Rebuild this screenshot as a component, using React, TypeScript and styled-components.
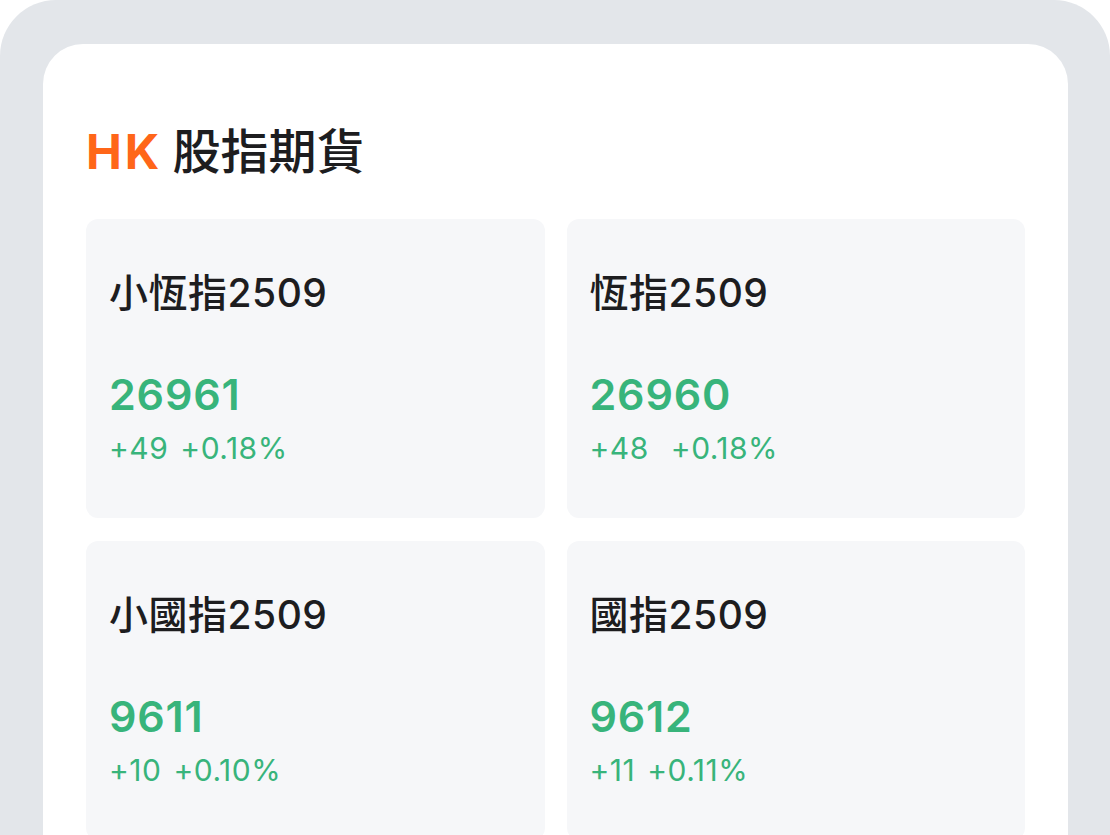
import styled, { createGlobalStyle } from 'styled-components';

const GlobalStyle = createGlobalStyle`
  html, body {
    margin: 0;
    padding: 0;
    background: #ffffff;
    overflow: hidden;
  }
  body {
    font-family: "Inter", "Noto Sans CJK TC", sans-serif;
  }
`;

//#region Layout
const Frame = styled.div`
  width: 1110px;
  height: 835px;
  box-sizing: border-box;
  background: #e3e6ea;
  border-radius: 56px 56px 0 0;
  padding: 44px 42px 0 43px;
  overflow: hidden;
`;

const Sheet = styled.div`
  background: #ffffff;
  border-radius: 40px 40px 0 0;
  min-height: 100%;
  box-sizing: border-box;
  padding: 78px 43px 0 43px;
`;

const Heading = styled.h1`
  margin: 0 0 37px 0;
  display: flex;
  align-items: center;
  gap: 10px;
  font-size: 48px;
  line-height: 60px;
  font-weight: 500;
  color: #1d1d1f;
`;

const Tag = styled.span`
  color: #ff6619;
  font-weight: 700;
  letter-spacing: 3px;
`;

const Grid = styled.div`
  display: grid;
  grid-template-columns: 1fr 1fr;
  column-gap: 22px;
  row-gap: 23px;
`;
//#endregion

//#region Card
const Card = styled.div`
  background: #f6f7f9;
  border-radius: 12px;
  height: 299px;
  box-sizing: border-box;
  padding: 50px 23px 0 23px;
`;

const Name = styled.div`
  font-size: 39px;
  line-height: 48px;
  font-weight: 500;
  letter-spacing: 0.5px;
  color: #1d1d1f;
`;

const Price = styled.div`
  margin-top: 52px;
  font-size: 43px;
  line-height: 50px;
  font-weight: 600;
  letter-spacing: 0.8px;
  color: #38b47b;
`;

const Change = styled.div<{ $gap: number }>`
  margin-top: 11px;
  display: flex;
  gap: ${(p) => p.$gap}px;
  font-size: 30px;
  line-height: 36px;
  font-weight: 400;
  letter-spacing: 0.5px;
  color: #38b47b;
`;
//#endregion

const items = [
  { name: '小恆指2509', price: '26961', diff: '+49', pct: '+0.18%', gap: 12 },
  { name: '恆指2509', price: '26960', diff: '+48', pct: '+0.18%', gap: 22 },
  { name: '小國指2509', price: '9611', diff: '+10', pct: '+0.10%', gap: 12 },
  { name: '國指2509', price: '9612', diff: '+11', pct: '+0.11%', gap: 12 },
];

export default function App() {
  return (
    <>
      <GlobalStyle />
      <Frame>
        <Sheet>
          <Heading>
            <Tag>HK</Tag>
            <span>股指期貨</span>
          </Heading>
          <Grid>
            {items.map((it) => (
              <Card key={it.name}>
                <Name>{it.name}</Name>
                <Price>{it.price}</Price>
                <Change $gap={it.gap}>
                  <span>{it.diff}</span>
                  <span>{it.pct}</span>
                </Change>
              </Card>
            ))}
          </Grid>
        </Sheet>
      </Frame>
    </>
  );
}
